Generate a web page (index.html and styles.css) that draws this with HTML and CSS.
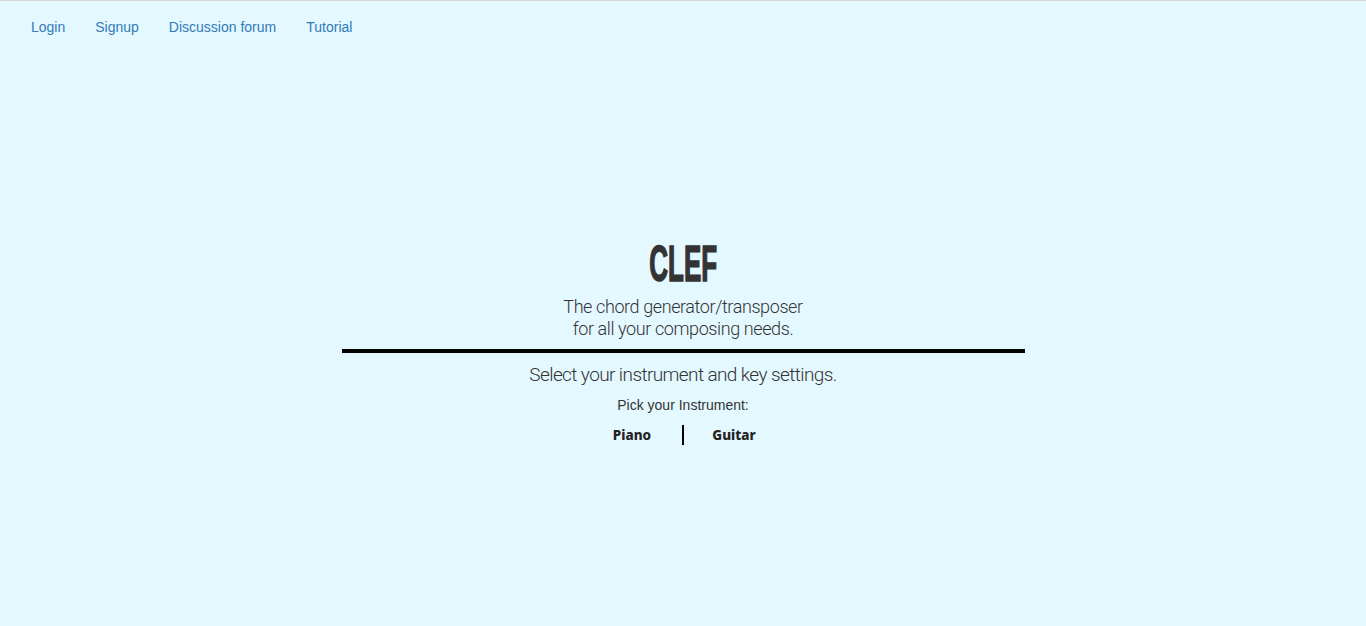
FILE: index.html
```html
<!DOCTYPE html>
<html>
<head>
<meta charset="utf-8">
<link rel="stylesheet" href="styles.css">
</head>
<body>
<nav class="nav">
  <a href="#">Login</a>
  <a href="#">Signup</a>
  <a href="#">Discussion forum</a>
  <a href="#">Tutorial</a>
</nav>
<main class="hero">
  <h1 class="title"><span>CLEF</span></h1>
  <p class="subtitle">The chord generator/transposer<br>for all your composing needs.</p>
  <hr class="rule">
  <p class="select">Select your instrument and key settings.</p>
  <p class="pick">Pick your Instrument:</p>
  <div class="choices">
    <a href="#" class="choice">Piano</a>
    <span class="divider"></span>
    <a href="#" class="choice">Guitar</a>
  </div>
</main>
</body>
</html>
```

FILE: styles.css
```css
html, body {
  margin: 0;
  padding: 0;
}
body {
  background: #e4f8ff;
  border-top: 1px solid #d9d9d9;
  min-height: 625px;
  font-family: "Liberation Sans", Arial, sans-serif;
  color: #333;
}
.nav {
  display: flex;
  padding: 6px 16px 0;
}
.nav a {
  display: block;
  padding: 10px 15px;
  font-size: 14px;
  line-height: 20px;
  color: #337ab7;
  text-decoration: none;
}
.hero {
  display: flex;
  flex-direction: column;
  align-items: center;
  margin-top: 191px;
}
.title {
  margin: 0;
  font-family: "Liberation Sans", sans-serif;
  font-weight: 700;
  font-size: 50px;
  line-height: 52px;
  color: #333;
}
.title span {
  display: inline-block;
  transform: scaleX(0.52);
  -webkit-text-stroke: 1.6px #333;
}
.subtitle {
  margin: 6px 0 0;
  font-family: Roboto, "Liberation Sans", sans-serif;
  font-weight: 300;
  font-size: 18px;
  line-height: 22px;
  letter-spacing: -0.4px;
  text-align: center;
  color: #333;
}
.rule {
  width: 50%;
  height: 4px;
  border: 0;
  background: #000;
  margin: 9px 0 0;
}
.select {
  margin: 10px 0 0;
  font-family: Roboto, "Liberation Sans", sans-serif;
  font-weight: 300;
  font-size: 19px;
  line-height: 24px;
  letter-spacing: -0.6px;
  color: #333;
}
.pick {
  margin: 8px 0 0;
  font-size: 14px;
  line-height: 20px;
  color: #333;
}
.choices {
  display: flex;
  align-items: center;
  margin-top: 10px;
}
.choice {
  font-family: "Noto Sans", sans-serif;
  font-weight: 800;
  font-size: 13.5px;
  color: #222;
  text-decoration: none;
  width: 70px;
  text-align: center;
}
.divider {
  width: 2px;
  height: 20px;
  background: #000;
  margin: 0 15px;
}
```
